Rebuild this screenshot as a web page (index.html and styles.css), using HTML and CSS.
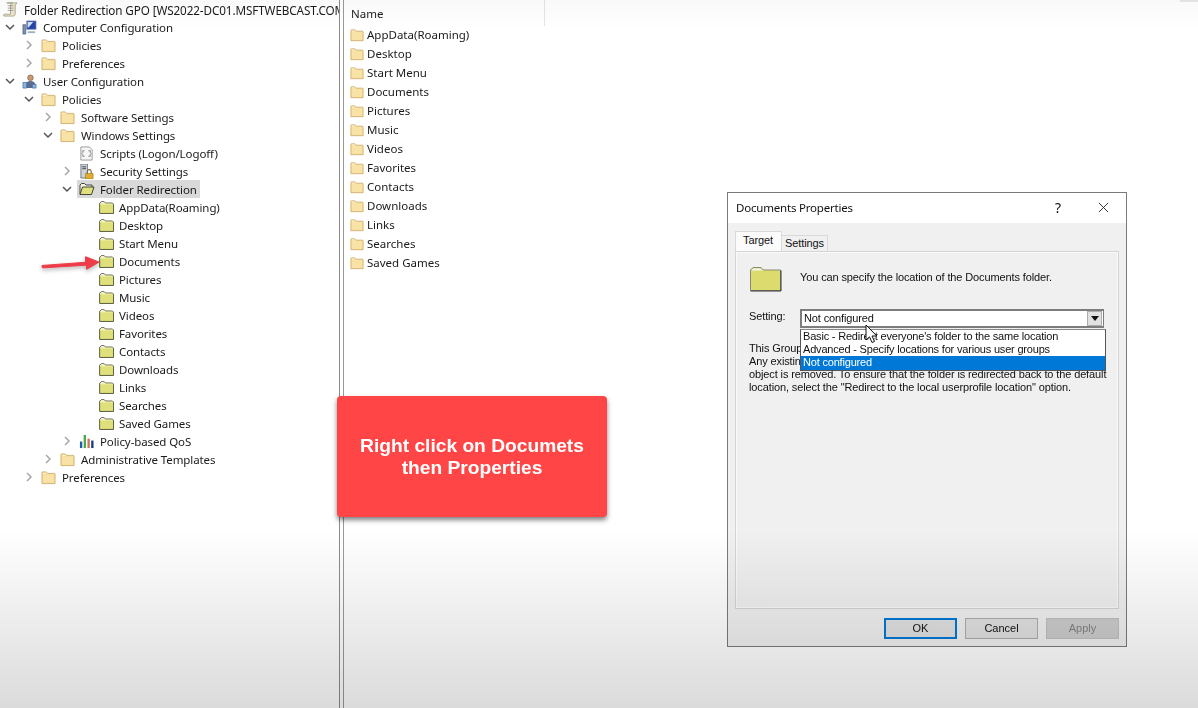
FILE: index.html
```html
<!DOCTYPE html>
<html lang="en">
<head>
<meta charset="utf-8">
<title>Folder Redirection GPO</title>
<link rel="stylesheet" href="styles.css">
</head>
<body>
<svg class="defs" width="0" height="0" aria-hidden="true">
  <symbol id="f-tan" viewBox="0 0 16 16">
    <path d="M1 14.500V2.600c0-.4.3-.6.6-.6h4l1.400 1.600h7.400c.3 0 .6.3.6.6v10.300z" fill="#f3d58c" stroke="#c4a662" stroke-width=".8"/>
    <path d="M2 4.600h12v9H2z" fill="#f9e2a6"/>
    <path d="M1.800 2.800h3.600l1.200 1.200H1.800z" fill="#fff6dc"/>
  </symbol>
  <symbol id="f-yel" viewBox="0 0 16 14">
    <path d="M.6 13.400V2.400L2.200.8h3.400l1.400 1.400h7.400l1.200 1.200v10z" fill="#dfe07a" stroke="#3f3f2a" stroke-width=".9"/>
    <path d="M1.200 2.600l1.200-1.200h3l1.200 1.200z" fill="#fff"/>
    <path d="M1.400 3.200h13.200" stroke="#f6f6c8" stroke-width=".8"/>
  </symbol>
  <symbol id="f-big" viewBox="0 0 32 26">
    <path d="M1 24.500V4L3.500 1.500h8L14 4h17v20.500z" fill="#dcdc6e" stroke="#8a8a7a"/>
    <path d="M2 4.500l2-2h7l2 2z" fill="#f4f4f4"/>
    <path d="M1 25h30.500V4.500" fill="none" stroke="#333" stroke-width="1"/>
  </symbol>
  <symbol id="chev-r" viewBox="0 0 10 10"><path d="M3 1l4 4-4 4" fill="none" stroke="#a8a8a8" stroke-width="1.500"/></symbol>
  <symbol id="chev-d" viewBox="0 0 10 10"><path d="M1 3l4 4 4-4" fill="none" stroke="#555" stroke-width="1.500"/></symbol>
</svg>

<div class="page">
  <nav class="tree">
    <div class="title-row">
      <svg class="ico" viewBox="0 0 16 16"><path d="M4 1h11c-1 1-2 2-2 3v9c0 1-1 2-2 2H1c-1 0-.5-2 .5-2H8V3c0-1 1-2 2-2z" fill="#eee7cd" stroke="#9a9478" stroke-width=".8"/><path d="M5 4h6M5 6.500h6M5 9h6" stroke="#8d8d80" stroke-width=".8"/></svg>
      <span class="title-text">Folder Redirection GPO [WS2022-DC01.MSFTWEBCAST.COM] Policy</span>
    </div>

    <div class="row d0"><svg class="chev"><use href="#chev-d"/></svg><svg class="ico" viewBox="0 0 16 16"><path d="M5 1h10v9H5z" fill="#2444a8" stroke="#8a9ab8" stroke-width=".8"/><path d="M6 2h6l-5 6H6z" fill="#cfe0f6"/><path d="M1 5h3v10H1z" fill="#7d93b0" stroke="#40566f" stroke-width=".7"/><path d="M6 12h8v2H6z" fill="#9db0c8"/></svg><span class="lbl">Computer Configuration</span></div>
    <div class="row d1"><svg class="chev"><use href="#chev-r"/></svg><svg class="ico"><use href="#f-tan"/></svg><span class="lbl">Policies</span></div>
    <div class="row d1"><svg class="chev"><use href="#chev-r"/></svg><svg class="ico"><use href="#f-tan"/></svg><span class="lbl">Preferences</span></div>
    <div class="row d0"><svg class="chev"><use href="#chev-d"/></svg><svg class="ico" viewBox="0 0 16 16"><circle cx="9" cy="4" r="3" fill="#c89a70" stroke="#6c4a30" stroke-width=".6"/><path d="M4 15v-4c0-2 2-3.500 5-3.500s5 1.500 5 3.500v4z" fill="#5b6f8c"/><path d="M1 15V9h4v6z" fill="#8fb4e0" stroke="#3f6a9e" stroke-width=".7"/><path d="M11 15v-4h4v4z" fill="#8fb4e0" stroke="#3f6a9e" stroke-width=".7"/></svg><span class="lbl">User Configuration</span></div>
    <div class="row d1"><svg class="chev"><use href="#chev-d"/></svg><svg class="ico"><use href="#f-tan"/></svg><span class="lbl">Policies</span></div>
    <div class="row d2"><svg class="chev"><use href="#chev-r"/></svg><svg class="ico"><use href="#f-tan"/></svg><span class="lbl">Software Settings</span></div>
    <div class="row d2"><svg class="chev"><use href="#chev-d"/></svg><svg class="ico"><use href="#f-tan"/></svg><span class="lbl">Windows Settings</span></div>
    <div class="row d3"><span class="chev"></span><svg class="ico" viewBox="0 0 16 16"><path d="M2 1h9l3 3v11H2z" fill="#f7f7f7" stroke="#8c8c8c" stroke-width=".9"/><path d="M6 5H4v2l-1 1 1 1v2h2M10 5h2v2l1 1-1 1v2h-2" fill="none" stroke="#777" stroke-width=".9"/></svg><span class="lbl">Scripts (Logon/Logoff)</span></div>
    <div class="row d3"><svg class="chev"><use href="#chev-r"/></svg><svg class="ico" viewBox="0 0 16 16"><path d="M2 0h7v15H2z" fill="#cdd2d8" stroke="#5a6068" stroke-width=".8"/><path d="M3.500 3h4M3.500 5h4" stroke="#3c4046" stroke-width="1"/><path d="M7 10h8v6H7z" fill="#e2ad2c" stroke="#96701a" stroke-width=".6"/><path d="M9 10V8a2 2 0 0 1 4 0v2" fill="none" stroke="#7c6a3a" stroke-width="1.200"/></svg><span class="lbl">Security Settings</span></div>
    <div class="row d3"><svg class="chev"><use href="#chev-d"/></svg>
      <span class="sel"><svg class="ico-open" viewBox="0 0 16 14"><path d="M1 12V3l1.500-1.500h3L7 3h6v2" fill="#f4f4e0" stroke="#333" stroke-width=".9"/><path d="M1 12.500l2.500-7.500H15l-2.500 7.500z" fill="#dfe07a" stroke="#333" stroke-width=".9"/></svg><span class="lbl">Folder Redirection</span></span>
    </div>
    <div class="row d4"><span class="chev"></span><svg class="ico-y"><use href="#f-yel"/></svg><span class="lbl">AppData(Roaming)</span></div>
    <div class="row d4"><span class="chev"></span><svg class="ico-y"><use href="#f-yel"/></svg><span class="lbl">Desktop</span></div>
    <div class="row d4"><span class="chev"></span><svg class="ico-y"><use href="#f-yel"/></svg><span class="lbl">Start Menu</span></div>
    <div class="row d4"><span class="chev"></span><svg class="ico-y"><use href="#f-yel"/></svg><span class="lbl">Documents</span></div>
    <div class="row d4"><span class="chev"></span><svg class="ico-y"><use href="#f-yel"/></svg><span class="lbl">Pictures</span></div>
    <div class="row d4"><span class="chev"></span><svg class="ico-y"><use href="#f-yel"/></svg><span class="lbl">Music</span></div>
    <div class="row d4"><span class="chev"></span><svg class="ico-y"><use href="#f-yel"/></svg><span class="lbl">Videos</span></div>
    <div class="row d4"><span class="chev"></span><svg class="ico-y"><use href="#f-yel"/></svg><span class="lbl">Favorites</span></div>
    <div class="row d4"><span class="chev"></span><svg class="ico-y"><use href="#f-yel"/></svg><span class="lbl">Contacts</span></div>
    <div class="row d4"><span class="chev"></span><svg class="ico-y"><use href="#f-yel"/></svg><span class="lbl">Downloads</span></div>
    <div class="row d4"><span class="chev"></span><svg class="ico-y"><use href="#f-yel"/></svg><span class="lbl">Links</span></div>
    <div class="row d4"><span class="chev"></span><svg class="ico-y"><use href="#f-yel"/></svg><span class="lbl">Searches</span></div>
    <div class="row d4"><span class="chev"></span><svg class="ico-y"><use href="#f-yel"/></svg><span class="lbl">Saved Games</span></div>
    <div class="row d3"><svg class="chev"><use href="#chev-r"/></svg><svg class="ico" viewBox="0 0 16 16"><path d="M1 8h2.500v7H1z" fill="#1c5fb0"/><path d="M5 1h2.500v14H5z" fill="#4aa84a"/><path d="M9 5h2.500v10H9z" fill="#c8785a"/><path d="M13 7h2.500v8H13z" fill="#163e80"/></svg><span class="lbl">Policy-based QoS</span></div>
    <div class="row d2"><svg class="chev"><use href="#chev-r"/></svg><svg class="ico"><use href="#f-tan"/></svg><span class="lbl">Administrative Templates</span></div>
    <div class="row d1"><svg class="chev"><use href="#chev-r"/></svg><svg class="ico"><use href="#f-tan"/></svg><span class="lbl">Preferences</span></div>
  </nav>

  <div class="splitter"></div>

  <main class="list">
    <div class="list-head"><span class="col-name">Name</span></div>
    <div class="list-row"><svg class="ico-l"><use href="#f-tan"/></svg><span>AppData(Roaming)</span></div>
    <div class="list-row"><svg class="ico-l"><use href="#f-tan"/></svg><span>Desktop</span></div>
    <div class="list-row"><svg class="ico-l"><use href="#f-tan"/></svg><span>Start Menu</span></div>
    <div class="list-row"><svg class="ico-l"><use href="#f-tan"/></svg><span>Documents</span></div>
    <div class="list-row"><svg class="ico-l"><use href="#f-tan"/></svg><span>Pictures</span></div>
    <div class="list-row"><svg class="ico-l"><use href="#f-tan"/></svg><span>Music</span></div>
    <div class="list-row"><svg class="ico-l"><use href="#f-tan"/></svg><span>Videos</span></div>
    <div class="list-row"><svg class="ico-l"><use href="#f-tan"/></svg><span>Favorites</span></div>
    <div class="list-row"><svg class="ico-l"><use href="#f-tan"/></svg><span>Contacts</span></div>
    <div class="list-row"><svg class="ico-l"><use href="#f-tan"/></svg><span>Downloads</span></div>
    <div class="list-row"><svg class="ico-l"><use href="#f-tan"/></svg><span>Links</span></div>
    <div class="list-row"><svg class="ico-l"><use href="#f-tan"/></svg><span>Searches</span></div>
    <div class="list-row"><svg class="ico-l"><use href="#f-tan"/></svg><span>Saved Games</span></div>
  </main>
</div>

<svg class="arrow" viewBox="0 0 64 20"><path d="M2 11.500L47 8.200V2.500L61 8l-13 7.500v-4.300L2.500 14z" fill="#ee3b47" stroke="#ee3b47" stroke-linejoin="round"/></svg>

<div class="callout"><span>Right click on Documets</span><span>then Properties</span></div>

<section class="dialog">
  <header class="dlg-title">
    <span class="dlg-name">Documents Properties</span>
    <span class="dlg-help">?</span>
    <svg class="dlg-close" viewBox="0 0 12 12"><path d="M1 1l10 10M11 1L1 11" stroke="#222" stroke-width="1"/></svg>
  </header>
  <div class="dlg-body">
    <div class="tabs">
      <span class="tab tab-on">Target</span>
      <span class="tab">Settings</span>
    </div>
    <div class="panel">
      <div class="panel-top">
        <svg class="big-folder"><use href="#f-big"/></svg>
        <span class="panel-msg">You can specify the location of the Documents folder.</span>
      </div>
      <div class="setting">
        <span class="setting-lbl">Setting:</span>
        <div class="combo">
          <span>Not configured</span>
          <span class="combo-btn"><svg viewBox="0 0 8 5" width="8" height="5"><path d="M0 0h8L4 5z" fill="#111"/></svg></span>
          <ul class="drop">
            <li>Basic - Redirect everyone's folder to the same location</li>
            <li>Advanced - Specify locations for various user groups</li>
            <li class="drop-on">Not configured</li>
          </ul>
        </div>
      </div>
      <p class="desc">
        <span>This Group Policy object does not redirect this folder.</span>
        <span>Any existing setting stays in place after the Group Policy</span>
        <span>object is removed. To ensure that the folder is redirected back to the default</span>
        <span>location, select the "Redirect to the local userprofile location" option.</span>
      </p>
    </div>
    <div class="buttons">
      <span class="btn btn-ok">OK</span>
      <span class="btn">Cancel</span>
      <span class="btn btn-off">Apply</span>
    </div>
  </div>
</section>

<svg class="cursor" viewBox="0 0 13 20"><path d="M1 1v15l3.500-3.200L7 18.500l2.500-1.100-2.500-5.400h4.800z" fill="#fff" stroke="#111" stroke-width="1"/></svg>

<div class="corner"></div>
<div class="shade"></div>
</body>
</html>
```
FILE: styles.css
```css
html, body { margin: 0; padding: 0; height: 100%; overflow: hidden; background: #fff; }
body { font-family: "Noto Sans", "Open Sans", sans-serif; font-size: 11.500px; color: #1a1a1a; }
.defs { position: absolute; }

.page { display: flex; height: 708px; }

/* tree */
.tree { width: 339px; flex: none; overflow: hidden; box-sizing: border-box; letter-spacing: -.1px; }
.title-row { display: flex; align-items: center; height: 18px; padding-left: 3px; white-space: nowrap; }
.title-row .ico { margin-right: 6px; margin-top: 1px; }
.title-text { font-size: 11.700px; margin-top: 1px; }
.row { display: flex; align-items: center; height: 18px; white-space: nowrap; }
.d0 { padding-left: 5px; }
.d1 { padding-left: 24px; }
.d2 { padding-left: 43px; }
.d3 { padding-left: 62px; }
.d4 { padding-left: 81px; }
.chev { width: 10px; height: 10px; flex: none; margin-right: 7px; }
.ico { width: 15px; height: 15px; flex: none; margin-right: 6px; }
.ico-y { width: 15px; height: 13px; flex: none; margin-right: 5px; margin-left: 1px; }
.sel { display: flex; align-items: center; height: 18px; margin-left: -2px; padding: 0 3px 0 2px; background: #d9d9d9; }
.ico-open { width: 16px; height: 14px; flex: none; margin-right: 5px; }

.splitter { width: 3px; flex: none; border-left: 1px solid #8c8c8c; border-right: 1px solid #9a9a9a; }

/* list */
.list { flex: 1; padding-left: 6px; }
.list-head { height: 25px; }
.col-name { display: block; width: 193px; padding-left: 1px; height: 26px; line-height: 27px; border-right: 1px solid #e6e6e6; }
.list-row { display: flex; align-items: center; height: 19px; white-space: nowrap; }
.ico-l { width: 14px; height: 14px; flex: none; margin-right: 3px; }

/* arrow */
.arrow { position: absolute; left: 40px; top: 254px; width: 62px; height: 20px; filter: drop-shadow(0 2px 2px rgba(0,0,0,.3)); }

/* callout */
.callout { position: absolute; left: 337px; top: 396px; width: 270px; height: 121px; border-radius: 4px; background: #ff4545; box-shadow: 0 3px 5px rgba(0,0,0,.5); color: #fff; display: flex; flex-direction: column; align-items: center; justify-content: center; font: bold 19.200px/22px "Liberation Sans", sans-serif; }

/* dialog */
.dialog { position: absolute; left: 727px; top: 192px; width: 400px; height: 455px; box-sizing: border-box; border: 1px solid #7a7a7a; background: #f0f0f0; font: 11px/13px "Liberation Sans", sans-serif; letter-spacing: -.12px; color: #111; display: flex; flex-direction: column; }
.dlg-title { height: 30px; box-sizing: border-box; padding: 0 17px 2px 8px; background: #fff; display: flex; align-items: center; flex: none; letter-spacing: -.2px; }
.dlg-name { flex: 1; font: 11.500px "Noto Sans", sans-serif; }
.dlg-help { margin-right: 37px; font: 14px "Noto Sans", sans-serif; }
.dlg-close { width: 11px; height: 11px; }
.dlg-body { flex: 1; display: flex; flex-direction: column; padding: 8px 7px 8px 7px; min-height: 0; }
.tabs { display: flex; align-items: flex-end; height: 20px; flex: none; position: relative; z-index: 1; }
.tab { height: 15px; width: 45px; text-align: center; line-height: 14px; background: #f0f0f0; border: 1px solid #d9d9d9; border-bottom: 0; border-left: 0; }
.tab-on { width: 44px; height: 19px; line-height: 17px; padding-right: 1px; box-sizing: content-box; background: #fbfbfb; border-left: 1px solid #d9d9d9; }
.panel { height: 358px; flex: none; box-sizing: border-box; border: 2px solid #fafafa; outline: 1px solid #d4d4d4; outline-offset: -1px; padding: 12px 11px 0 12px; background: #f0f0f0; }
.panel-top { display: flex; align-items: center; height: 27px; }
.panel-msg { margin-bottom: 2px; }
.big-folder { width: 33px; height: 26px; margin-right: 18px; }
.setting { display: flex; align-items: center; margin-top: 16px; height: 21px; }
.setting-lbl { width: 51px; margin-bottom: 5px; }
.combo { position: relative; width: 304px; height: 19px; box-sizing: border-box; border: 2px solid #7d7d7d; border-right-width: 1px; background: #fff; display: flex; align-items: center; padding-left: 2px; justify-content: space-between; }
.combo-btn { width: 15px; height: 15px; margin-right: 1px; background: #e1e1e1; border: 1px solid #adadad; box-sizing: border-box; display: flex; align-items: center; justify-content: center; }
.drop { position: absolute; left: -2px; top: 18px; width: 306px; box-sizing: border-box; margin: 0; padding: 0; list-style: none; background: #fff; border: 1px solid #555; border-top-color: #888; white-space: nowrap; letter-spacing: -.19px; }
.drop li { height: 13px; padding-left: 2px; line-height: 13px; }
.drop .drop-on { background: #0078d7; color: #fff; height: 14px; }
.desc { margin: 13px 0 0; }
.desc span { display: block; height: 13px; white-space: nowrap; }
.buttons { display: flex; justify-content: flex-end; gap: 8px; margin-top: 9px; letter-spacing: 0; }
.btn { width: 73px; height: 21px; box-sizing: border-box; border: 1px solid #adadad; background: #e1e1e1; text-align: center; line-height: 19px; }
.btn-ok { border: 2px solid #0078d7; line-height: 17px; }
.btn-off { background: #ccc; border-color: #bfbfbf; color: #838383; }

.cursor { position: absolute; left: 865px; top: 324px; width: 13px; height: 20px; }
.corner { position: absolute; right: 0; top: 0; width: 18px; height: 2px; background: #e8e8e8; }
.shade { position: absolute; inset: 0; pointer-events: none; mix-blend-mode: multiply; background: linear-gradient(#f9f9f9, #fff 30px, #fff 530px, #f3f3f3 590px, #dbdbdb 708px); }
```
